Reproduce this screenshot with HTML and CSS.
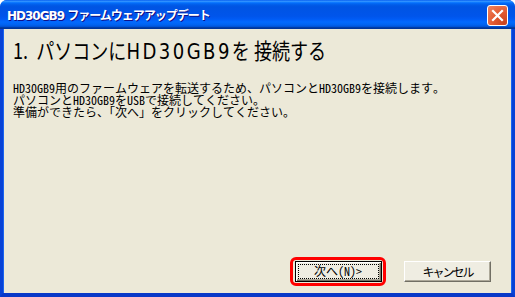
FILE: index.html
```html
<!DOCTYPE html>
<html lang="ja">
<head>
<meta charset="utf-8">
<title>HD30GB9 ファームウェアアップデート</title>
<link rel="stylesheet" href="styles.css">
</head>
<body>
<div class="window">
  <div class="titlebar">
    <span class="title">HD30GB9 ファームウェアアップデート</span>
    <span class="close" aria-label="閉じる">
      <svg width="13" height="13" viewBox="0 0 13 13"><path d="M2 2 L11 11 M11 2 L2 11" stroke="#fff" stroke-width="2.2" stroke-linecap="square"/></svg>
    </span>
  </div>
  <div class="client">
    <h1 class="heading"><span class="step">1.</span> パソコンに<span class="latin">HD30GB9</span>を 接続する</h1>
    <div class="message">
      <p>HD30GB9用のファームウェアを転送するため、パソコンとHD30GB9を接続します。</p>
      <p>パソコンとHD30GB9をUSBで接続してください。</p>
      <p>準備ができたら、「次へ」をクリックしてください。</p>
    </div>
    <div class="actions">
      <span class="highlight"><button class="btn default"><span class="focus">次へ(N)&gt;</span></button></span>
      <button class="btn cancel">キャンセル</button>
    </div>
  </div>
</div>
</body>
</html>
```

FILE: styles.css
```css
html, body {
  margin: 0;
  padding: 0;
  background: #ffffff;
}

.window {
  width: 515px;
  height: 297px;
  display: flex;
  flex-direction: column;
  border-radius: 7px 7px 0 0;
  overflow: hidden;
  background: #0055e5;
}

.titlebar {
  height: 29px;
  flex: none;
  display: flex;
  align-items: center;
  justify-content: space-between;
  padding: 0 7px 0 7px;
  box-sizing: border-box;
  background: linear-gradient(to bottom,
    #0058ee 0%, #3593ff 4%, #288eff 6%, #127dff 8%, #036ffc 10%,
    #0262ee 14%, #0057e5 20%, #0054e3 24%, #0055eb 56%, #005bf5 66%,
    #026afe 76%, #0062ef 86%, #0052d6 92%, #0040ab 94%, #003092 100%);
}

.title {
  color: #ffffff;
  font-family: "DejaVu Sans", "Noto Sans CJK JP", sans-serif;
  font-weight: bold;
  font-size: 12px;
  letter-spacing: -1px;
  text-shadow: 1px 1px 0 #0f1089;
  margin-top: -1px;
}

.close {
  width: 21px;
  height: 21px;
  box-sizing: border-box;
  border: 1px solid #ffffff;
  border-radius: 3px;
  background: radial-gradient(circle at 85% 90%, #c8441f 0%, #e2582f 45%, #f08560 100%);
  display: flex;
  align-items: center;
  justify-content: center;
  margin-top: 1px;
}

.client {
  flex: 1;
  display: flex;
  flex-direction: column;
  background: #ece9d8;
  border-left: 3px solid #0842d6;
  border-right: 3px solid #0842d6;
  border-bottom: 4px solid #0838c8;
  box-shadow: inset 1px 0 0 #1a64ef, inset -1px 0 0 #1a64ef;
  padding: 7px 10px 7px 10px;
  font-family: "Noto Sans Mono CJK JP", "Noto Sans CJK JP", sans-serif;
  color: #000000;
}

.heading {
  margin: 0;
  font-family: "Noto Sans CJK JP", sans-serif;
  font-weight: normal;
  font-size: 22px;
  line-height: 26px;
  white-space: nowrap;
  transform: scaleX(0.82);
  transform-origin: left center;
}

.heading .step {
  margin-right: 5px;
}

.heading .latin {
  font-family: "DejaVu Sans", sans-serif;
  font-size: 22px;
  letter-spacing: 3px;
}

.message {
  margin-top: 17px;
  font-size: 12px;
  line-height: 12px;
}

.message p {
  margin: 0;
}

.actions {
  margin-top: auto;
  display: flex;
  justify-content: flex-end;
  align-items: center;
  gap: 18px;
  padding-right: 11px;
}

.highlight {
  display: flex;
  border: 3px solid #ff0000;
  border-radius: 6px;
  padding: 1px 1px 1px 2px;
}

.btn {
  width: 87px;
  height: 21px;
  margin: 0;
  padding: 0;
  box-sizing: border-box;
  font-family: "Noto Sans Mono CJK JP", "Noto Sans CJK JP", sans-serif;
  font-size: 12px;
  line-height: 12px;
  color: #000000;
  background: #efede2;
  border: 1px solid;
  border-color: #ffffff #716f64 #716f64 #ffffff;
  box-shadow: inset -1px -1px 0 #aca899;
  display: flex;
  align-items: center;
  justify-content: center;
}

.btn.default {
  border: 1px solid #000000;
  box-shadow: inset 1px 1px 0 #ffffff, inset -1px -1px 0 #716f64, inset -2px -2px 0 #aca899;
}

.focus {
  display: flex;
  align-items: center;
  justify-content: center;
  width: 81px;
  height: 15px;
  box-sizing: border-box;
  border: 1px dotted #000000;
  margin: -1px 0 0 -1px;
}

.cancel {
  letter-spacing: -2px;
}
```
